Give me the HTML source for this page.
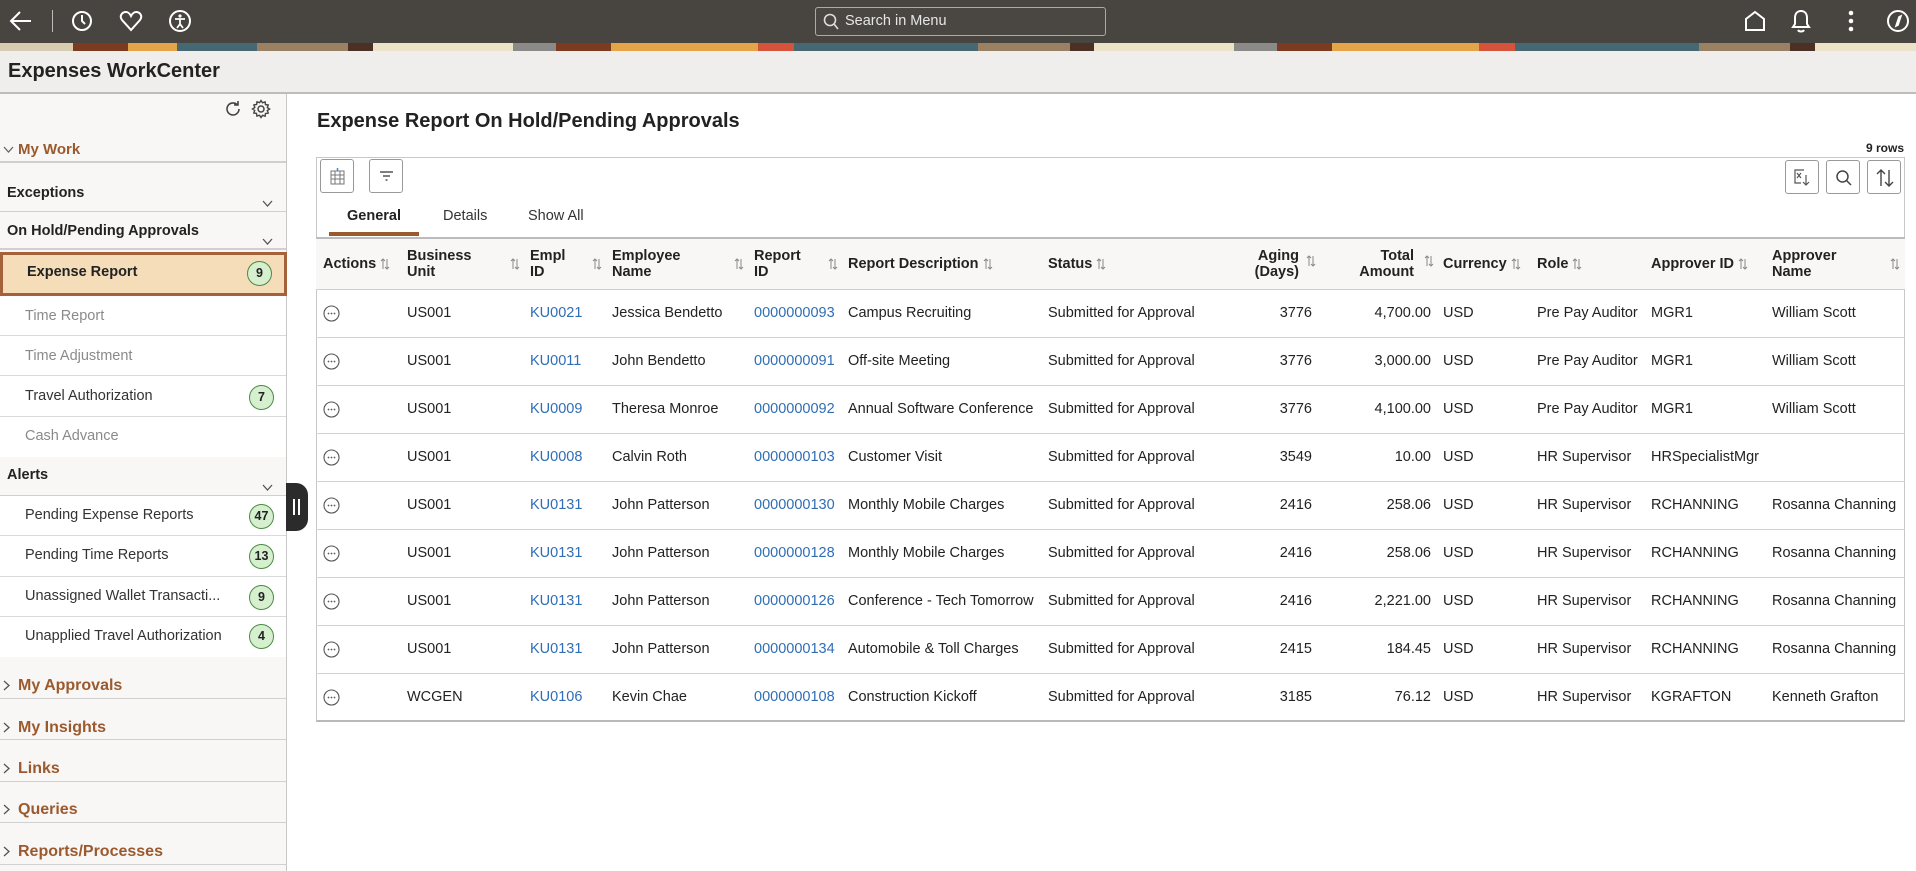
<!DOCTYPE html>
<html><head><meta charset="utf-8">
<style>
*{box-sizing:border-box;margin:0;padding:0}
body{width:1916px;height:871px;overflow:hidden;background:#fff;font-family:"Liberation Sans",Arial,sans-serif;color:#333;position:relative}
.abs{position:absolute}
#top{left:0;top:0;width:1916px;height:43px;background:#48443f}
#banner{left:0;top:43px;width:1916px;height:8px;background:linear-gradient(90deg,#d8ccb0 0 73px,#7b3b20 73px 128px,#e4a448 128px 177px,#456873 177px 257px,#9a8163 257px 348px,#4c3024 348px 373px,#ebe2c8 373px 513px,#8a8a88 513px 556px,#7b3b20 556px 611px,#e4a448 611px 758px,#d4533a 758px 794px,#456873 794px 978px,#9a8163 978px 1070px,#4c3024 1070px 1094px,#ebe2c8 1094px 1234px,#8a8a88 1234px 1277px,#7b3b20 1277px 1332px,#e4a448 1332px 1479px,#d4533a 1479px 1515px,#456873 1515px 1699px,#9a8163 1699px 1790px,#4c3024 1790px 1815px,#ebe2c8 1815px)}
#hdr{left:0;top:51px;width:1916px;height:43px;background:#efeeec;border-bottom:2px solid #bdbcba}
#hdr h1{position:absolute;left:8px;top:9px;font-size:20px;font-weight:bold;color:#222}
#side{left:0;top:94px;width:287px;height:777px;background:#f8f7f5;border-right:1px solid #c8c8c8}
.si{position:absolute;left:0;width:286px;background:#fff;border-bottom:1px solid #d9d9d9;font-size:14.5px;padding-left:25px}
.sh{position:absolute;left:7px;font-size:14.5px;font-weight:bold;color:#222}
.sec{position:absolute;left:0;width:286px;border-bottom:1px solid #d0d0d0;font-size:16px;font-weight:bold;color:#9b5a2e;padding-left:18px}
.sec svg,.mw svg{position:absolute;left:3px}
.badge{position:absolute;right:12px;height:25px;min-width:25px;border-radius:13px;background:#d6efcf;border:1px solid #4b8a43;font-size:12.5px;font-weight:bold;text-align:center;line-height:23px;color:#222;padding:0 3px}
.chev{position:absolute;left:262px}
.gray{color:#8a8a8a}
#title{left:317px;top:110px;font-size:20px;font-weight:bold;color:#222}
#rows{right:12px;top:141px;font-size:12px;font-weight:bold;color:#222}
#box{left:316px;top:157px;width:1589px;height:565px;border:1px solid #c8c8c8;border-bottom:2px solid #b9b9b9}
.btn{position:absolute;width:34px;height:34px;border:1px solid #999;border-radius:3px;background:#fff}
.tab{position:absolute;top:208px;font-size:14.5px;color:#333}
table{position:absolute;left:316px;top:237px;border-collapse:collapse;table-layout:fixed;width:1589px}
th{height:51px;background:#f8f7f5;border-top:2px solid #bcbcbc;border-bottom:1px solid #cfcfcf;font-size:14.5px;font-weight:bold;color:#222;text-align:left;padding:0 7px;line-height:16px;position:relative}
td{height:48px;border-bottom:1px solid #d3d3d3;font-size:14.5px;padding:0 7px;white-space:nowrap;overflow:hidden;color:#222}
td.r,th.r{text-align:right}
a{color:#2f6db5;text-decoration:none}
.so{display:inline-block;width:10px;height:12px;vertical-align:middle;margin-left:4px}
th .sa{position:absolute;top:19px}
.dot{display:inline-block;width:17px;height:17px;vertical-align:middle}
#handle{left:286px;top:483px;width:22px;height:48px;background:#2b2b2b;border-radius:0 12px 12px 0}
</style></head><body>
<div id="top" class="abs">
<svg class="abs" style="left:9px;top:10px" width="24" height="22" viewBox="0 0 24 22"><path d="M22 11H3M11 2L2 11l9 9" fill="none" stroke="#fff" stroke-width="2"/></svg>
<div class="abs" style="left:52px;top:10px;width:1px;height:22px;background:#bbb"></div>
<svg class="abs" style="left:71px;top:9px" width="22" height="24" viewBox="0 0 22 24"><circle cx="11" cy="12" r="9" fill="none" stroke="#fff" stroke-width="2"/><path d="M11 6v6l3 3" fill="none" stroke="#fff" stroke-width="2"/></svg>
<svg class="abs" style="left:119px;top:10px" width="24" height="22" viewBox="0 0 24 22"><path d="M12 20L3 10C0 6 3 2 7 2c2 0 4 2 5 4 1-2 3-4 5-4 4 0 7 4 4 8z" fill="none" stroke="#fff" stroke-width="2"/></svg>
<svg class="abs" style="left:168px;top:9px" width="24" height="24" viewBox="0 0 24 24"><circle cx="12" cy="12" r="10" fill="none" stroke="#fff" stroke-width="2"/><circle cx="12" cy="7" r="1.6" fill="#fff"/><path d="M7 10h10M12 10v5l-3 4M12 15l3 4" fill="none" stroke="#fff" stroke-width="1.8"/></svg>
<div class="abs" style="left:815px;top:7px;width:291px;height:29px;border:1px solid #aaa;border-radius:3px;background:#4a4642"></div>
<svg class="abs" style="left:823px;top:13px" width="16" height="18" viewBox="0 0 16 18"><circle cx="7" cy="7" r="5.5" fill="none" stroke="#ddd" stroke-width="1.6"/><path d="M11 11l4 5" stroke="#ddd" stroke-width="1.6"/></svg>
<div class="abs" style="left:845px;top:13px;font-size:14.5px;color:#e6e6e6">Search in Menu</div>
<svg class="abs" style="left:1744px;top:10px" width="22" height="22" viewBox="0 0 22 22"><path d="M2 20V9l9-7 9 7v11z" fill="none" stroke="#fff" stroke-width="2"/></svg>
<svg class="abs" style="left:1791px;top:9px" width="20" height="24" viewBox="0 0 20 24"><path d="M10 2c-4 0-6 3-6 7v6l-2 3h16l-2-3V9c0-4-2-7-6-7zM7 21c1 2 5 2 6 0" fill="none" stroke="#fff" stroke-width="2"/></svg>
<svg class="abs" style="left:1847px;top:10px" width="8" height="24" viewBox="0 0 8 24"><circle cx="4" cy="3" r="2.3" fill="#fff"/><circle cx="4" cy="11" r="2.3" fill="#fff"/><circle cx="4" cy="19" r="2.3" fill="#fff"/></svg>
<svg class="abs" style="left:1886px;top:9px" width="24" height="24" viewBox="0 0 24 24"><circle cx="12" cy="12" r="10" fill="none" stroke="#fff" stroke-width="2"/><path d="M15 7l-3 9-2 1 3-9z" fill="none" stroke="#fff" stroke-width="1.6"/></svg>
</div>
<div id="banner" class="abs"></div>
<div id="hdr" class="abs"><h1>Expenses WorkCenter</h1></div>

<div id="side" class="abs">
<svg class="abs" style="left:224px;top:6px" width="18" height="18" viewBox="0 0 18 18"><path d="M15 9a6 6 0 1 1-2-4.5M14 1v4h-4" fill="none" stroke="#444" stroke-width="1.6"/></svg>
<svg class="abs" style="left:251px;top:5px" width="20" height="20" viewBox="0 0 20 20"><circle cx="10" cy="10" r="3" fill="none" stroke="#444" stroke-width="1.5"/><path d="M10 1.5l1.5 2.3 2.6-.9.4 2.7 2.7.4-.9 2.6 2.3 1.4-2.3 1.5.9 2.6-2.7.4-.4 2.7-2.6-.9L10 18.5l-1.5-2.3-2.6.9-.4-2.7-2.7-.4.9-2.6L1.5 10l2.3-1.5-.9-2.6 2.7-.4.4-2.7 2.6.9z" fill="none" stroke="#444" stroke-width="1.4"/></svg>
<div class="mw abs" style="left:0;top:44px;width:286px;height:25px;border-bottom:2px solid #cfcfcf;font-size:15px;font-weight:bold;color:#9b5a2e;padding-left:18px;padding-top:3px"><svg style="top:8px" width="11" height="8" viewBox="0 0 11 8"><path d="M1 1l4.5 5L10 1" fill="none" stroke="#666" stroke-width="1.3"/></svg>My Work</div>
<div class="abs" style="left:0;top:71px;width:286px;height:47px;border-bottom:1px solid #d0d0d0"></div>
<div class="sh" style="top:91px">Exceptions</div>
<svg class="chev" style="top:106px" width="11" height="7" viewBox="0 0 11 7"><path d="M1 1l4.5 5L10 1" fill="none" stroke="#555" stroke-width="1.3"/></svg>
<div class="abs" style="left:0;top:118px;width:286px;height:38px;border-bottom:2px solid #d0d0d0"></div>
<div class="sh" style="top:129px">On Hold/Pending Approvals</div>
<svg class="chev" style="top:144px" width="11" height="7" viewBox="0 0 11 7"><path d="M1 1l4.5 5L10 1" fill="none" stroke="#555" stroke-width="1.3"/></svg>
<div class="abs" style="left:0;top:158px;width:287px;height:44px;background:#f4ddb8;border:3px solid #a5623a"></div>
<div class="abs" style="left:27px;top:170px;font-size:14.5px;font-weight:bold;color:#222">Expense Report</div>
<div class="badge" style="top:167px;right:14px">9</div>
<div class="si gray" style="top:202px;height:40px;padding-top:12px">Time Report</div>
<div class="si gray" style="top:242px;height:40px;padding-top:12px">Time Adjustment</div>
<div class="si" style="top:282px;height:41px;padding-top:12px">Travel Authorization<div class="badge" style="top:9px">7</div></div>
<div class="si gray" style="top:323px;height:40px;padding-top:11px;border-bottom:none">Cash Advance</div>
<div class="abs" style="left:0;top:363px;width:286px;height:39px;border-bottom:1px solid #d0d0d0"></div>
<div class="sh" style="top:373px">Alerts</div>
<svg class="chev" style="top:390px" width="11" height="7" viewBox="0 0 11 7"><path d="M1 1l4.5 5L10 1" fill="none" stroke="#555" stroke-width="1.3"/></svg>
<div class="si" style="top:402px;height:40px;padding-top:11px">Pending Expense Reports<div class="badge" style="top:8px">47</div></div>
<div class="si" style="top:442px;height:41px;padding-top:11px">Pending Time Reports<div class="badge" style="top:8px">13</div></div>
<div class="si" style="top:483px;height:40px;padding-top:11px">Unassigned Wallet Transacti...<div class="badge" style="top:8px">9</div></div>
<div class="si" style="top:523px;height:40px;padding-top:11px;border-bottom:none">Unapplied Travel Authorization<div class="badge" style="top:7px">4</div></div>
<div class="sec" style="top:563px;height:42px;padding-top:20px"><svg style="top:23px" width="7" height="11" viewBox="0 0 7 11"><path d="M1 1l5 4.5L1 10" fill="none" stroke="#555" stroke-width="1.3"/></svg>My Approvals</div>
<div class="sec" style="top:605px;height:41px;padding-top:20px"><svg style="top:23px" width="7" height="11" viewBox="0 0 7 11"><path d="M1 1l5 4.5L1 10" fill="none" stroke="#555" stroke-width="1.3"/></svg>My Insights</div>
<div class="sec" style="top:646px;height:42px;padding-top:20px"><svg style="top:23px" width="7" height="11" viewBox="0 0 7 11"><path d="M1 1l5 4.5L1 10" fill="none" stroke="#555" stroke-width="1.3"/></svg>Links</div>
<div class="sec" style="top:688px;height:41px;padding-top:19px"><svg style="top:22px" width="7" height="11" viewBox="0 0 7 11"><path d="M1 1l5 4.5L1 10" fill="none" stroke="#555" stroke-width="1.3"/></svg>Queries</div>
<div class="sec" style="top:729px;height:42px;padding-top:20px"><svg style="top:23px" width="7" height="11" viewBox="0 0 7 11"><path d="M1 1l5 4.5L1 10" fill="none" stroke="#555" stroke-width="1.3"/></svg>Reports/Processes</div>
</div>
<div id="handle" class="abs"><div class="abs" style="left:7px;top:16px;width:2px;height:16px;background:#fff"></div><div class="abs" style="left:12px;top:16px;width:2px;height:16px;background:#fff"></div></div>

<div id="title" class="abs">Expense Report On Hold/Pending Approvals</div>
<div id="rows" class="abs">9 rows</div>
<div id="box" class="abs"></div>
<div class="btn" style="left:320px;top:159px"><svg style="position:absolute;left:9px;top:8px" width="15" height="17" viewBox="0 0 15 17"><path d="M1 3h13v13H1zM1 7h13M1 11h13M5 3v13M10 3v13" fill="none" stroke="#777" stroke-width="1"/><path d="M7.5 0v3" stroke="#3a8bd0" stroke-width="1.5"/></svg></div>
<div class="btn" style="left:369px;top:159px"><svg style="position:absolute;left:9px;top:11px" width="15" height="12" viewBox="0 0 15 12"><path d="M1 1h13M4 5h7M6.5 9h2" stroke="#555" stroke-width="1.4"/></svg></div>
<div class="btn" style="left:1785px;top:160px"><svg style="position:absolute;left:8px;top:8px" width="18" height="18" viewBox="0 0 18 18"><path d="M10 1H1v13h6" fill="none" stroke="#555" stroke-width="1.2"/><path d="M3 4l4 5M7 4l-4 5M12 6v10M9 13l3 3 3-3" fill="none" stroke="#555" stroke-width="1.2"/></svg></div>
<div class="btn" style="left:1826px;top:160px"><svg style="position:absolute;left:8px;top:8px" width="18" height="18" viewBox="0 0 18 18"><circle cx="7.5" cy="7.5" r="5.5" fill="none" stroke="#444" stroke-width="1.5"/><path d="M11.5 11.5L16 16" stroke="#444" stroke-width="1.5"/></svg></div>
<div class="btn" style="left:1867px;top:160px"><svg style="position:absolute;left:8px;top:7px" width="18" height="20" viewBox="0 0 18 20"><path d="M5 18V2M1 6l4-4 4 4M13 2v16M9 14l4 4 4-4" fill="none" stroke="#444" stroke-width="1.4"/></svg></div>
<div class="tab" style="left:347px;font-weight:bold;color:#222">General</div>
<div class="abs" style="left:329px;top:232px;width:90px;height:4px;background:#9b5a2e"></div>
<div class="tab" style="left:443px">Details</div>
<div class="tab" style="left:528px">Show All</div>

<svg width="0" height="0" style="position:absolute"><defs><g id="s"><path d="M3 11V1M1 3l2-2 2 2M7 1v10M5 9l2 2 2-2" fill="none" stroke="#888" stroke-width="1"/></g><g id="d"><circle cx="8.5" cy="8.5" r="7.5" fill="#fff" stroke="#555" stroke-width="1.1"/><circle cx="5.5" cy="8.5" r="0.9" fill="#555"/><circle cx="8.5" cy="8.5" r="0.9" fill="#555"/><circle cx="11.5" cy="8.5" r="0.9" fill="#555"/></g></defs></svg>
<table>
<colgroup><col style="width:84px"><col style="width:123px"><col style="width:82px"><col style="width:142px"><col style="width:94px"><col style="width:200px"><col style="width:195px"><col style="width:83px"><col style="width:117px"><col style="width:94px"><col style="width:114px"><col style="width:121px"><col style="width:140px"></colgroup>
<tr>
<th>Actions<svg class="so" viewBox="0 0 10 12"><use href="#s"/></svg></th>
<th>Business<br>Unit<svg class="so sa" style="left:106px" viewBox="0 0 10 12"><use href="#s"/></svg></th>
<th>Empl<br>ID<svg class="so sa" style="left:65px" viewBox="0 0 10 12"><use href="#s"/></svg></th>
<th>Employee<br>Name<svg class="so sa" style="left:125px" viewBox="0 0 10 12"><use href="#s"/></svg></th>
<th>Report<br>ID<svg class="so sa" style="left:77px" viewBox="0 0 10 12"><use href="#s"/></svg></th>
<th>Report Description<svg class="so" viewBox="0 0 10 12"><use href="#s"/></svg></th>
<th>Status<svg class="so" viewBox="0 0 10 12"><use href="#s"/></svg></th>
<th class="r" style="padding-right:20px">Aging<br>(Days)<svg class="so sa" style="left:66px;top:16px" viewBox="0 0 10 12"><use href="#s"/></svg></th>
<th class="r" style="padding-right:22px">Total<br>Amount<svg class="so sa" style="left:101px;top:16px" viewBox="0 0 10 12"><use href="#s"/></svg></th>
<th>Currency<svg class="so" viewBox="0 0 10 12"><use href="#s"/></svg></th>
<th>Role<svg class="so" viewBox="0 0 10 12"><use href="#s"/></svg></th>
<th>Approver ID<svg class="so" viewBox="0 0 10 12"><use href="#s"/></svg></th>
<th>Approver<br>Name<svg class="so sa" style="left:121px" viewBox="0 0 10 12"><use href="#s"/></svg></th>
</tr>
<tr><td><svg class="dot" viewBox="0 0 17 17"><use href="#d"/></svg></td><td>US001</td><td><a>KU0021</a></td><td>Jessica Bendetto</td><td><a>0000000093</a></td><td>Campus Recruiting</td><td>Submitted for Approval</td><td class="r">3776</td><td class="r" style="padding-right:5px">4,700.00</td><td>USD</td><td>Pre Pay Auditor</td><td>MGR1</td><td>William Scott</td></tr>
<tr><td><svg class="dot" viewBox="0 0 17 17"><use href="#d"/></svg></td><td>US001</td><td><a>KU0011</a></td><td>John Bendetto</td><td><a>0000000091</a></td><td>Off-site Meeting</td><td>Submitted for Approval</td><td class="r">3776</td><td class="r" style="padding-right:5px">3,000.00</td><td>USD</td><td>Pre Pay Auditor</td><td>MGR1</td><td>William Scott</td></tr>
<tr><td><svg class="dot" viewBox="0 0 17 17"><use href="#d"/></svg></td><td>US001</td><td><a>KU0009</a></td><td>Theresa Monroe</td><td><a>0000000092</a></td><td>Annual Software Conference</td><td>Submitted for Approval</td><td class="r">3776</td><td class="r" style="padding-right:5px">4,100.00</td><td>USD</td><td>Pre Pay Auditor</td><td>MGR1</td><td>William Scott</td></tr>
<tr><td><svg class="dot" viewBox="0 0 17 17"><use href="#d"/></svg></td><td>US001</td><td><a>KU0008</a></td><td>Calvin Roth</td><td><a>0000000103</a></td><td>Customer Visit</td><td>Submitted for Approval</td><td class="r">3549</td><td class="r" style="padding-right:5px">10.00</td><td>USD</td><td>HR Supervisor</td><td>HRSpecialistMgr</td><td></td></tr>
<tr><td><svg class="dot" viewBox="0 0 17 17"><use href="#d"/></svg></td><td>US001</td><td><a>KU0131</a></td><td>John Patterson</td><td><a>0000000130</a></td><td>Monthly Mobile Charges</td><td>Submitted for Approval</td><td class="r">2416</td><td class="r" style="padding-right:5px">258.06</td><td>USD</td><td>HR Supervisor</td><td>RCHANNING</td><td>Rosanna Channing</td></tr>
<tr><td><svg class="dot" viewBox="0 0 17 17"><use href="#d"/></svg></td><td>US001</td><td><a>KU0131</a></td><td>John Patterson</td><td><a>0000000128</a></td><td>Monthly Mobile Charges</td><td>Submitted for Approval</td><td class="r">2416</td><td class="r" style="padding-right:5px">258.06</td><td>USD</td><td>HR Supervisor</td><td>RCHANNING</td><td>Rosanna Channing</td></tr>
<tr><td><svg class="dot" viewBox="0 0 17 17"><use href="#d"/></svg></td><td>US001</td><td><a>KU0131</a></td><td>John Patterson</td><td><a>0000000126</a></td><td>Conference - Tech Tomorrow</td><td>Submitted for Approval</td><td class="r">2416</td><td class="r" style="padding-right:5px">2,221.00</td><td>USD</td><td>HR Supervisor</td><td>RCHANNING</td><td>Rosanna Channing</td></tr>
<tr><td><svg class="dot" viewBox="0 0 17 17"><use href="#d"/></svg></td><td>US001</td><td><a>KU0131</a></td><td>John Patterson</td><td><a>0000000134</a></td><td>Automobile &amp; Toll Charges</td><td>Submitted for Approval</td><td class="r">2415</td><td class="r" style="padding-right:5px">184.45</td><td>USD</td><td>HR Supervisor</td><td>RCHANNING</td><td>Rosanna Channing</td></tr>
<tr><td style="border-bottom:none"><svg class="dot" viewBox="0 0 17 17"><use href="#d"/></svg></td><td style="border-bottom:none">WCGEN</td><td style="border-bottom:none"><a>KU0106</a></td><td style="border-bottom:none">Kevin Chae</td><td style="border-bottom:none"><a>0000000108</a></td><td style="border-bottom:none">Construction Kickoff</td><td style="border-bottom:none">Submitted for Approval</td><td class="r" style="border-bottom:none">3185</td><td class="r" style="padding-right:5px;border-bottom:none">76.12</td><td style="border-bottom:none">USD</td><td style="border-bottom:none">HR Supervisor</td><td style="border-bottom:none">KGRAFTON</td><td style="border-bottom:none">Kenneth Grafton</td></tr>
</table>
</body></html>
